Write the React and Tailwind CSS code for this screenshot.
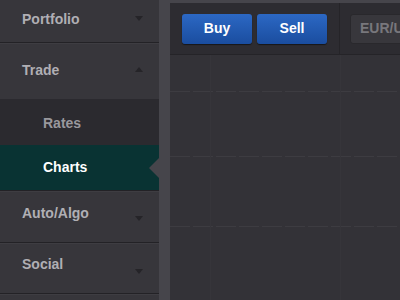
import React from "react";

const font = { fontFamily: '"Liberation Sans", Arial, sans-serif' };

function Caret({ up }) {
    return (
        <svg width="8" height="5" viewBox="0 0 8 5" className="shrink-0">
            {up ? <path d="M0 5 L4 0 L8 5 Z" fill="#252428" /> : <path d="M0 0 L8 0 L4 5 Z" fill="#252428" />}
        </svg>
    );
}

// textTop / caretTop: offsets inside the row, matching the original mockup
function NavRow({ label, h, up, textTop, caretTop, divider = true }) {
    return (
        <div className={`flex flex-col ${h}`}>
            <div className="flex-1 relative flex justify-between pl-[22px] pr-[16px]">
                <span className="text-[14px] leading-[16px] font-bold text-[#b0afb4]" style={{ marginTop: textTop }}>{label}</span>
                <span style={{ marginTop: caretTop }}><Caret up={up} /></span>
            </div>
            {divider && (
                <div>
                    <div className="h-px bg-[#232226]" />
                    <div className="h-px bg-[#3e3d42]" />
                </div>
            )}
        </div>
    );
}

export default function App() {
    return (
        <div className="w-[400px] h-[300px] flex overflow-hidden bg-[#36353a]" style={font}>
            <div className="w-[159px] shrink-0 flex flex-col bg-[#37363b]">
                <NavRow label="Portfolio" h="h-[44px]" textTop={11} caretTop={16} />
                <NavRow label="Trade" h="h-[55px]" up textTop={18} caretTop={23} divider={false} />
                <div className="h-[46px] bg-[#2b2a2f] flex items-center pl-[43px] pt-[2px]">
                    <span className="text-[14px] font-bold text-[#99989d]">Rates</span>
                </div>
                <div className="relative h-[45px] bg-[#093333] flex items-center pl-[43px]">
                    <span className="text-[14px] font-bold text-white">Charts</span>
                    <div className="absolute right-0 top-1/2 -translate-y-1/2 w-0 h-0 border-y-[10px] border-y-transparent border-r-[10px] border-r-[#46454b]" />
                </div>
                <div className="h-px bg-[#232226]" />
                <div className="h-px bg-[#3e3d42]" />
                <NavRow label="Auto/Algo" h="h-[52px]" textTop={13} caretTop={24} />
                <NavRow label="Social" h="h-[51px]" textTop={12} caretTop={25} />
            </div>
            <div className="w-[11px] shrink-0 bg-[#46454b]" />
            <div className="flex-1 flex flex-col pt-[3px] bg-[#46454b]">
                <div className="h-[52px] bg-[#2d2c31] flex items-center pl-[12px] gap-[5px] border-b border-[#252428]">
                    <button className="w-[70px] h-[30px] rounded-[3px] bg-gradient-to-b from-[#2c68c4] to-[#1a4d9f] text-white text-[14px] font-bold shadow-[0_1px_1px_rgba(0,0,0,0.5)]">Buy</button>
                    <button className="w-[70px] h-[30px] rounded-[3px] bg-gradient-to-b from-[#2c68c4] to-[#1a4d9f] text-white text-[14px] font-bold shadow-[0_1px_1px_rgba(0,0,0,0.5)]">Sell</button>
                    <div className="w-px h-[52px] bg-[#252428] ml-[7px]" />
                    <div className="ml-[5px] h-[30px] w-[80px] shrink-0 rounded-[3px] bg-[#38373c] border border-[#29282c] flex items-center pl-[9px] text-[14px] font-bold text-[#78777c] whitespace-nowrap">EUR/USD</div>
                </div>
                <div className="flex-1 bg-[#333237] relative">
                    <svg className="absolute inset-0" width="230" height="245">
                        <line x1="0" y1="36.5" x2="230" y2="36.5" stroke="#3d3c41" strokeDasharray="20 3" />
                        <line x1="0" y1="101.5" x2="230" y2="101.5" stroke="#3d3c41" strokeDasharray="20 3" />
                        <line x1="0" y1="171.5" x2="230" y2="171.5" stroke="#3d3c41" strokeDasharray="20 3" />
                        <line x1="40.5" y1="0" x2="40.5" y2="245" stroke="#36353a" />
                        <line x1="170.5" y1="0" x2="170.5" y2="245" stroke="#36353a" />
                    </svg>
                </div>
            </div>
        </div>
    );
}
